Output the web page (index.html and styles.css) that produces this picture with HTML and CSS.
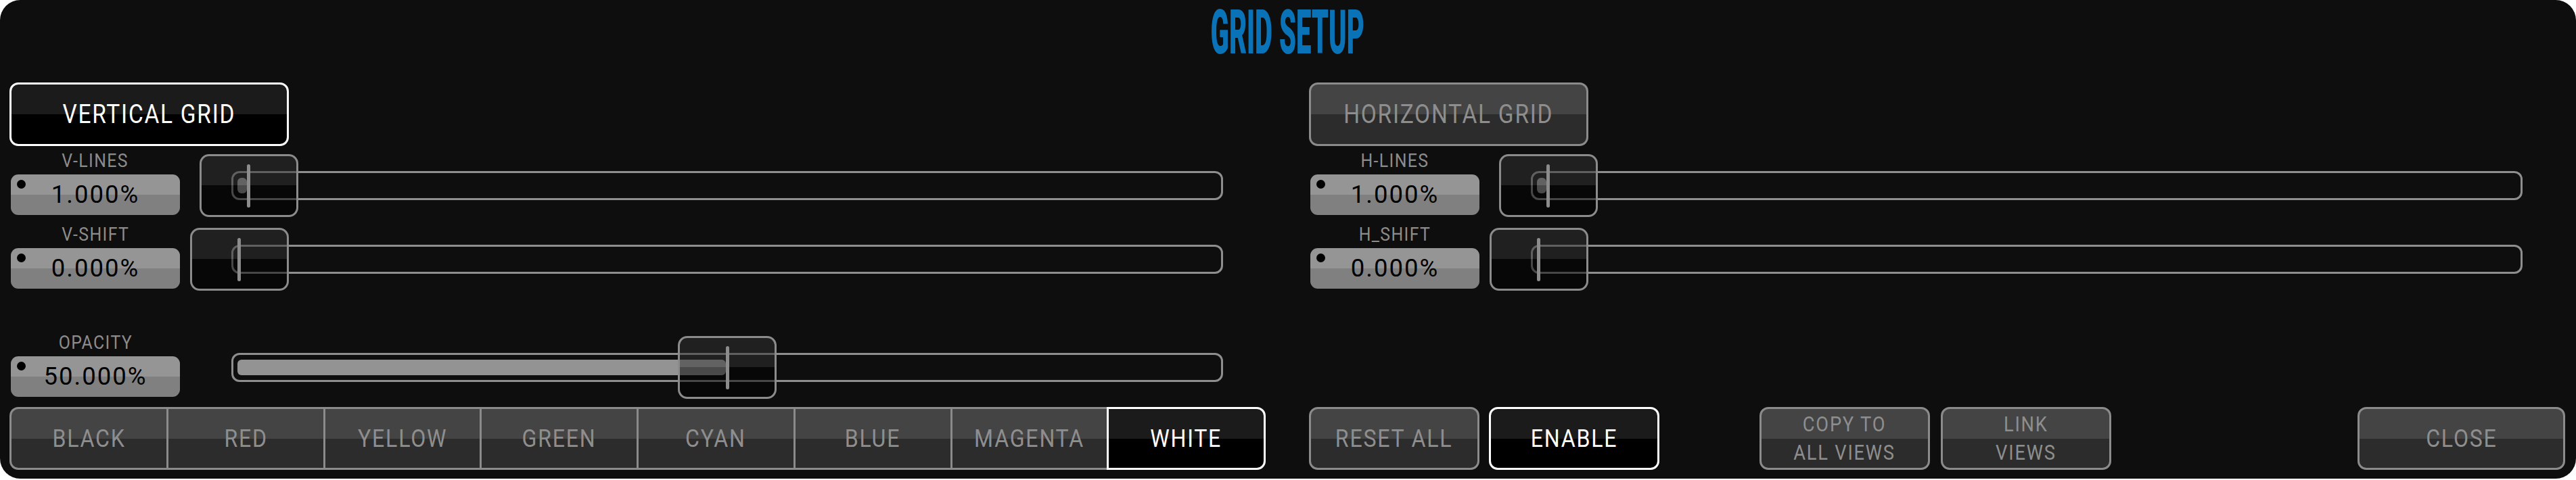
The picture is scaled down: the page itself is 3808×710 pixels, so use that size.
FILE: index.html
```html
<!DOCTYPE html>
<html>
<head>
<meta charset="utf-8">
<title>Grid Setup</title>
<link rel="stylesheet" href="styles.css">
</head>
<body>
<div class="panel">
  <h1 class="title"><span>GRID SETUP</span></h1>
  <div class="cols">
    <section class="col">
      <button class="btn mode sel"><span class="t">VERTICAL GRID</span></button>
      <div class="row first">
        <div class="field"><div class="label"><span class="lt">V-LINES</span></div><div class="value">1.000%</div></div>
        <div class="slider" style="--v:0.01"><div class="fill"></div><div class="knob"></div></div>
      </div>
      <div class="row">
        <div class="field"><div class="label"><span class="lt">V-SHIFT</span></div><div class="value">0.000%</div></div>
        <div class="slider" style="--v:0"><div class="fill"></div><div class="knob"></div></div>
      </div>
      <div class="row opacity">
        <div class="field"><div class="label"><span class="lt">OPACITY</span></div><div class="value">50.000%</div></div>
        <div class="slider" style="--v:0.5"><div class="fill"></div><div class="knob"></div></div>
      </div>
      <div class="colors">
        <button class="btn"><span class="t">BLACK</span></button>
        <button class="btn"><span class="t">RED</span></button>
        <button class="btn"><span class="t">YELLOW</span></button>
        <button class="btn"><span class="t">GREEN</span></button>
        <button class="btn"><span class="t">CYAN</span></button>
        <button class="btn"><span class="t">BLUE</span></button>
        <button class="btn"><span class="t">MAGENTA</span></button>
        <button class="btn sel"><span class="t">WHITE</span></button>
      </div>
    </section>
    <section class="col">
      <button class="btn mode"><span class="t">HORIZONTAL GRID</span></button>
      <div class="row first">
        <div class="field"><div class="label"><span class="lt">H-LINES</span></div><div class="value">1.000%</div></div>
        <div class="slider" style="--v:0.01"><div class="fill"></div><div class="knob"></div></div>
      </div>
      <div class="row">
        <div class="field"><div class="label"><span class="lt">H_SHIFT</span></div><div class="value">0.000%</div></div>
        <div class="slider" style="--v:0"><div class="fill"></div><div class="knob"></div></div>
      </div>
      <div class="actions">
        <button class="btn"><span class="t">RESET ALL</span></button>
        <button class="btn sel enable"><span class="t">ENABLE</span></button>
        <button class="btn two copy"><span class="t">COPY TO<br>ALL VIEWS</span></button>
        <button class="btn two link"><span class="t">LINK<br>VIEWS</span></button>
        <button class="btn close"><span class="t">CLOSE</span></button>
      </div>
    </section>
  </div>
</div>
</body>
</html>
```

FILE: styles.css
```css
* { box-sizing: border-box; margin: 0; padding: 0; }
html, body { background: #ffffff; }
body {
  width: 3808px;
  height: 710px;
  overflow: hidden;
  font-family: Roboto, "Liberation Sans", sans-serif;
}
.panel {
  width: 3808px;
  height: 708px;
  background: #0e0e0e;
  border-radius: 30px;
  padding: 0 16px 13px 14px;
  display: flex;
  flex-direction: column;
}
.title {
  height: 97px;
  line-height: 97px;
  text-align: center;
  font-size: 91px;
  font-weight: 900;
  color: #0a72b6;
}
.title span { display: inline-block; transform: scaleX(0.44); }
.cols {
  flex: 1;
  display: grid;
  grid-template-columns: 1857px 1857px;
  column-gap: 64px;
}
.col { display: flex; flex-direction: column; }

.btn {
  font-family: inherit;
  display: flex;
  align-items: center;
  justify-content: center;
  height: 93px;
  border: 3px solid #8b8b8b;
  border-radius: 13px;
  background: linear-gradient(#444444 50%, #2c2c2c 50%);
  color: #8e8e8e;
  font-size: 36.5px;
  font-weight: 400;
  letter-spacing: 2px;
  cursor: pointer;
}
.btn.sel {
  border-color: #ffffff;
  background: linear-gradient(#1b1b1b 50%, #000000 50%);
  color: #ffffff;
}
.t { display: inline-block; transform: scaleX(0.88); white-space: nowrap; }
.mode { margin-top: 25px; width: 413px; height: 94px; font-size: 38px; }

.row { display: flex; height: 93px; margin-top: 16px; }
.row.first { margin-top: 12px; }
.row.opacity { margin-top: 67px; }
.field { width: 250px; margin-left: 2px; }
.label {
  height: 21px;
  line-height: 21px;
  text-align: center;
  font-size: 27px;
  letter-spacing: 1.5px;
  color: #8c8c8c;
}
.lt { display: inline-block; transform: scaleX(0.92); }
.value {
  position: relative;
  margin-top: 9px;
  height: 60px;
  line-height: 60px;
  border-radius: 11px;
  background: linear-gradient(#959595 50%, #808080 50%);
  color: #000000;
  text-align: center;
  font-size: 36.5px;
  letter-spacing: 2px;
}
.value::before {
  content: "";
  position: absolute;
  left: 9px;
  top: 8px;
  width: 13px;
  height: 13px;
  border-radius: 50%;
  background: #000000;
}
.slider {
  position: relative;
  margin-left: 76px;
  margin-top: 25px;
  width: 1466px;
  height: 43px;
  border: 3px solid #8e8e8e;
  border-radius: 12px;
}
.fill {
  position: absolute;
  left: 6px;
  top: 7px;
  height: 23px;
  width: calc((100% - 17px) * var(--v));
  border-radius: 6px;
  background: #939393;
}
.knob {
  position: absolute;
  top: -28px;
  left: calc(8.5px + (100% - 17px) * var(--v));
  width: 146px;
  height: 93px;
  margin-left: -73px;
  border: 3px solid #8b8b8b;
  border-radius: 14px;
  background: linear-gradient(rgba(50, 50, 50, 0.5) 50%, rgba(0, 0, 0, 0.5) 50%);
}
.knob::after {
  content: "";
  position: absolute;
  left: 50%;
  top: 12px;
  width: 5px;
  height: 64px;
  margin-left: -2.5px;
  border-radius: 3px;
  background: #8c8c8c;
}

.colors { display: flex; margin-top: 12px; height: 93px; }
.colors .btn { flex: 1; border-radius: 0; border-right: none; }
.colors .btn:first-child { border-radius: 13px 0 0 13px; }
.colors .btn:last-child { border-right: 3px solid #ffffff; border-radius: 0 13px 13px 0; }

.actions { display: flex; margin-top: auto; height: 93px; }
.actions .btn { width: 252px; }
.actions .enable { margin-left: 14px; }
.actions .copy { margin-left: 148px; }
.actions .link { margin-left: 16px; }
.actions .close { margin-left: auto; width: 307px; }
.two { font-size: 31px; line-height: 42px; }
.two .t { text-align: center; }
```
